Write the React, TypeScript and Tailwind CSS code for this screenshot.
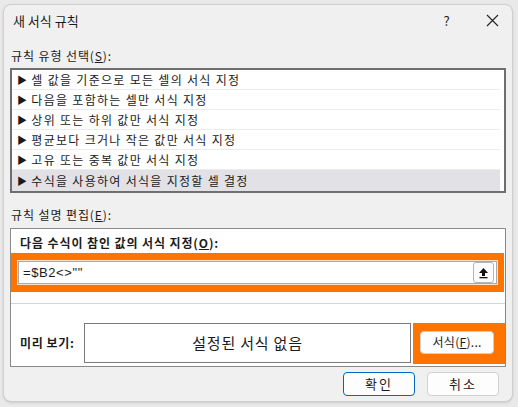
const FONT = "font-['Malgun_Gothic','Noto_Sans_CJK_KR','Noto_Sans',sans-serif]";

const ruleTypes = [
  "셀 값을 기준으로 모든 셀의 서식 지정",
  "다음을 포함하는 셀만 서식 지정",
  "상위 또는 하위 값만 서식 지정",
  "평균보다 크거나 작은 값만 서식 지정",
  "고유 또는 중복 값만 서식 지정",
  "수식을 사용하여 서식을 지정할 셀 결정",
];

function CollapseIcon() {
  return (
    <svg width="11" height="12" viewBox="0 0 11 12">
      <path d="M5.5 1 L10 6 L7 6 L7 9 L4 9 L4 6 L1 6 Z" fill="#111" />
      <rect x="1.5" y="10" width="8" height="1.3" fill="#111" />
    </svg>
  );
}

export default function App() {
  return (
    <div className={`w-[518px] h-[407px] bg-[#e9e9e9] pl-[3px] pt-[4px] ${FONT}`}>
      <div className="w-[510px] h-[398px] bg-[#f0f0f0] border border-[#cfcfcf] rounded-lg shadow-sm flex flex-col text-[12px] text-[#1b1b1b] tracking-[0.9px]">
        {/* title bar */}
        <div className="h-[31px] flex items-center pl-[9px] pr-[13px] shrink-0">
          <span className="text-[13px] tracking-[0px]">새 서식 규칙</span>
          <span className="ml-auto text-[13px] w-[12px] text-center">?</span>
          <svg className="ml-[33px]" width="13" height="13" viewBox="0 0 13 13">
            <path d="M1 1 L12 12 M12 1 L1 12" stroke="#222" strokeWidth="1.1" />
          </svg>
        </div>

        <div className="px-[6px] flex flex-col">
          <div className="h-[20px] mt-[10px] flex items-center pl-[1px]">
            규칙 유형 선택(<span className="underline">S</span>):
          </div>
          <div className="mt-[2px] h-[125px] bg-white border-2 border-[#6f6f6f] pr-[4px]">
            {ruleTypes.map((t, i) => (
              <div
                key={t}
                className={`h-[20px] flex items-center pl-[5px] tracking-[1.3px] ${
                  i === ruleTypes.length - 1 ? "bg-[#e1e1e6] h-[21px]" : "border-b border-[#ececec]"
                }`}
              >
                <span className="text-[10px] mr-[3px] leading-none">▶</span>
                {t}
              </div>
            ))}
          </div>

          <div className="h-[20px] mt-[12px] flex items-center pl-[1px]">
            규칙 설명 편집(<span className="underline">E</span>):
          </div>
          <div className="mt-[3px] h-[139px] bg-white border border-[#8a8a8a] flex flex-col">
            <div className="h-[20px] mt-[4px] pl-[9px] flex items-center font-bold">
              다음 수식이 참인 값의 서식 지정(<span className="underline">O</span>):
            </div>
            <div className="mr-[1px] h-[39px] bg-[#ff7300] p-[7px] pt-[8px]">
              <div className="h-[23px] bg-white border border-[#a9a9a9] outline outline-1 outline-[#f7e3c8] flex items-center pl-[4px] pr-[2px]">
                <span className="text-[13px] tracking-[0.6px] font-['Segoe_UI','Liberation_Sans',sans-serif]">=$B2&lt;&gt;""</span>
                <div className="ml-auto w-[21px] h-[21px] bg-[#fbfbfb] border border-[#b5b5b5] rounded-[3px] flex items-center justify-center">
                  <CollapseIcon />
                </div>
              </div>
            </div>
            <div className="mt-[11px] h-px bg-[#d4d4d4]" />
            <div className="mt-[19px] flex items-center h-[40px]">
              <span className="w-[73px] pl-[9px] font-bold tracking-[0.6px]">미리 보기:</span>
              <div className="w-[328px] h-[40px] border border-[#7a7a7a] flex items-center justify-center text-[15px] tracking-[0.8px]">
                설정된 서식 없음
              </div>
              <div className="ml-[2px] w-[92px] h-[41px] bg-[#ff7300] pl-[7px] pr-[11px] py-[8px]">
                <div className="h-[23px] bg-[#fdfdfd] border border-[#d0d0d0] rounded-[4px] flex items-center justify-center tracking-[0.3px]">
                  서식(<span className="underline">F</span>)...
                </div>
              </div>
            </div>
          </div>

          <div className="mt-[5px] flex justify-end gap-[12px] pr-[7px]">
            <button className="w-[72px] h-[24px] bg-[#fdfdfd] border-[1.5px] border-[#0067c0] rounded-[4px] text-[13px] tracking-[2px]">
              확인
            </button>
            <button className="w-[72px] h-[24px] bg-[#fdfdfd] border border-[#d0d0d0] rounded-[4px] text-[13px] tracking-[2px]">
              취소
            </button>
          </div>
        </div>
      </div>
    </div>
  );
}
